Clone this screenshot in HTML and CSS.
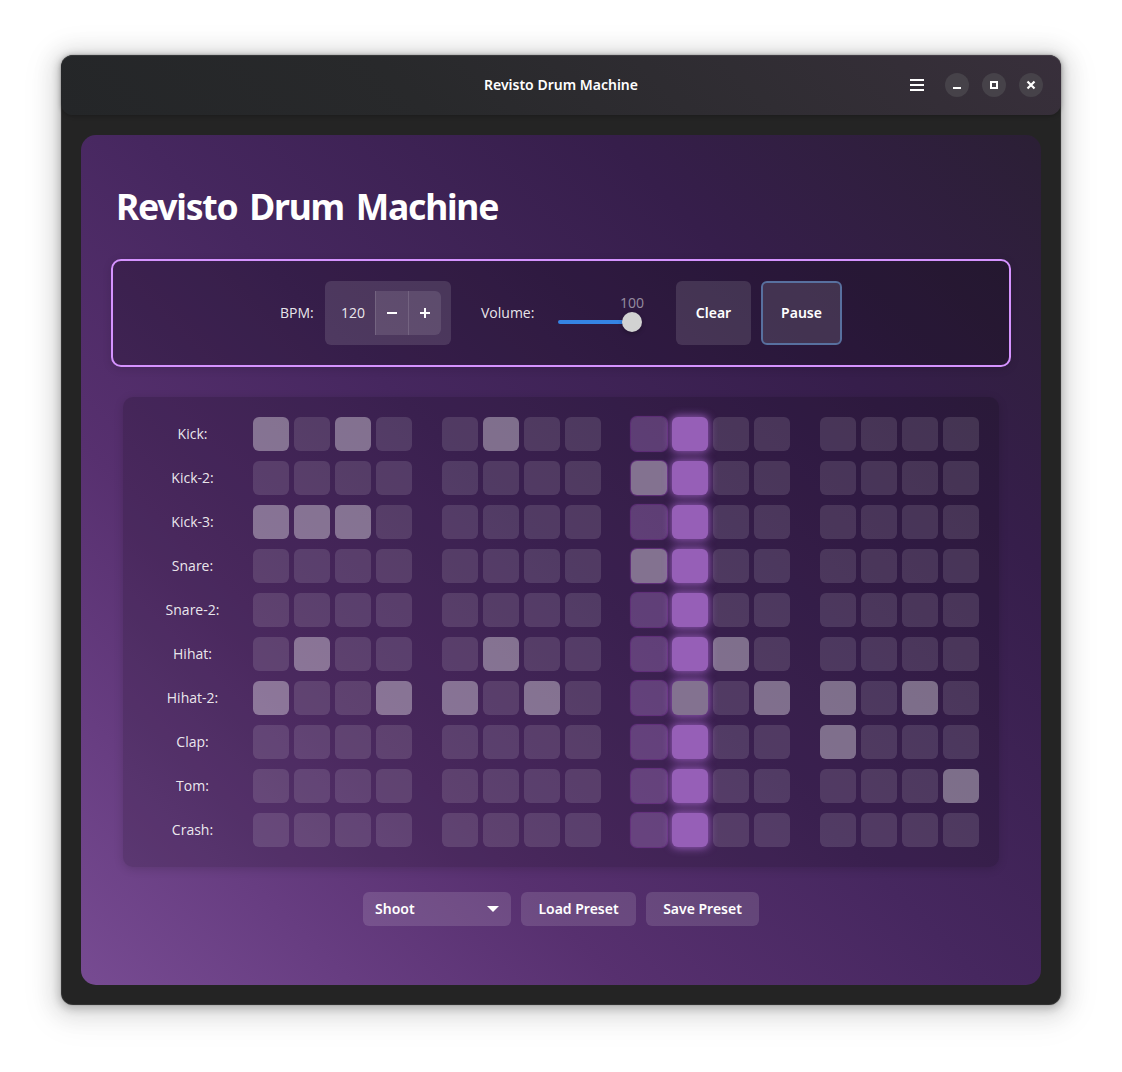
FILE: index.html
```html
<!DOCTYPE html>
<html lang="en">
<head>
<meta charset="utf-8">
<title>Revisto Drum Machine</title>
<link rel="stylesheet" href="styles.css">
</head>
<body>
<div class="window">
  <header class="headerbar">
    <div class="headerbar-title">Revisto Drum Machine</div>
    <div class="headerbar-end">
      <svg class="menu-icon" width="14" height="12" viewBox="0 0 14 12"><path d="M0 0h14v2H0zM0 5h14v2H0zM0 10h14v2H0z" fill="#fff"/></svg>
      <span class="window-button"><svg width="24" height="24" viewBox="0 0 24 24"><path d="M8 14h8v2H8z" fill="#fff"/></svg></span>
      <span class="window-button"><svg width="24" height="24" viewBox="0 0 24 24"><path d="M9 9h6v6H9z" fill="none" stroke="#fff" stroke-width="2"/></svg></span>
      <span class="window-button"><svg width="24" height="24" viewBox="0 0 24 24"><path d="M8.5 8.5l7 7M15.5 8.5l-7 7" stroke="#fff" stroke-width="2.2"/></svg></span>
    </div>
  </header>
  <main class="panel">
    <h1 class="title">Revisto Drum Machine</h1>
    <section class="controls">
      <span class="label bpm-label">BPM:</span>
      <div class="spin">
        <span class="spin-value">120</span>
        <span class="spin-button"><svg width="12" height="12" viewBox="0 0 12 12"><path d="M1 5h10v2H1z" fill="#fff"/></svg></span>
        <span class="spin-button spin-last"><svg width="12" height="12" viewBox="0 0 12 12"><path d="M1 5h4V1h2v4h4v2H7v4H5V7H1z" fill="#fff"/></svg></span>
      </div>
      <span class="label volume-label">Volume:</span>
      <div class="scale">
        <span class="scale-value">100</span>
        <div class="scale-row"><span class="scale-fill"></span><span class="scale-knob"></span></div>
      </div>
      <button class="control-button clear">Clear</button>
      <button class="control-button pause">Pause</button>
    </section>
    <section class="sequencer" id="sequencer"></section>
    <footer class="presets">
      <button class="preset dropdown"><span>Shoot</span><svg width="12" height="6" viewBox="0 0 12 6"><path d="M0 0h12L6 6z" fill="#fff"/></svg></button>
      <button class="preset load">Load Preset</button>
      <button class="preset save">Save Preset</button>
    </footer>
  </main>
</div>
<script src="script.js"></script>
</body>
</html>
```
FILE: script.js
```js
// Steps per track: "x" is on, "." is off
const tracks = [
  ["Kick:",    "x.x. .x.. .... ...."],
  ["Kick-2:",  ".... .... x... ...."],
  ["Kick-3:",  "xxx. .... .... ...."],
  ["Snare:",   ".... .... x... ...."],
  ["Snare-2:", ".... .... .... ...."],
  ["Hihat:",   ".x.. .x.. ..x. ...."],
  ["Hihat-2:", "x..x x.x. .x.x x.x."],
  ["Clap:",    ".... .... .... x..."],
  ["Tom:",     ".... .... .... ...x"],
  ["Crash:",   ".... .... .... ...."]
];
const playing = 9;
const root = document.getElementById("sequencer");
for (const [name, steps] of tracks) {
  const row = document.createElement("div");
  row.className = "track";
  const label = document.createElement("span");
  label.className = "label track-name";
  label.textContent = name;
  row.append(label);
  let index = 0;
  for (const beat of steps.split(" ")) {
    const group = document.createElement("div");
    group.className = "beat";
    for (const step of beat) {
      const cell = document.createElement("span");
      cell.className = "step";
      if (index === playing) cell.classList.add("playing");
      if (index === playing - 1) cell.classList.add("fading");
      if (step === "x") cell.classList.add("on");
      group.append(cell);
      index++;
    }
    row.append(group);
  }
  root.append(row);
}
```
FILE: styles.css
```css
* { box-sizing: border-box; }
body {
  margin: 0;
  padding: 55px 61px;
  height: 1072px;
  overflow: hidden;
  background: #fff;
  color: #fff;
  font-family: "Noto Sans", "Open Sans", sans-serif;
  font-size: 14px;
}
.window {
  width: 1000px;
  height: 950px;
  border-radius: 12px;
  background: #242424;
  box-shadow: inset 0 0 0 1px rgba(255,255,255,.07), 0 0 0 1px rgba(0,0,0,.05), 0 2px 8px 2px rgba(0,0,0,.2), 0 3px 20px 10px rgba(0,0,0,.09), 0 6px 32px 16px rgba(0,0,0,.04);
}
.headerbar {
  height: 60px;
  display: grid;
  grid-template-columns: 1fr auto 1fr;
  align-items: center;
  padding-right: 18px;
  border-radius: 12px;
  background: linear-gradient(45deg, #242628 0%, #28292b 35%, #302d33 68%, #382f3b 100%);
  box-shadow: inset 0 1px 0 rgba(255,255,255,.07), 0 1px 4px rgba(0,0,0,.25);
}
.headerbar-title {
  grid-column: 2;
  width: 156px;
  margin-left: 18px;
  padding-bottom: 2px;
  text-align: center;
  white-space: nowrap;
  font-weight: 600;
  font-size: 14px;
}
.headerbar-end {
  display: flex;
  justify-content: flex-end;
  align-items: center;
  gap: 13px;
}
.menu-icon { margin-right: 8px; }
.window-button {
  width: 24px;
  height: 24px;
  border-radius: 50%;
  background: #464249;
}
.window-button svg { display: block; }
.panel {
  width: 960px;
  height: 850px;
  margin: 20px;
  padding: 44px 30px 0;
  border-radius: 15px;
  background: linear-gradient(45deg, #774b92 0%, #673d81 15%, #57306f 30%, #46275f 50%, #361e4b 76%, #2b1f35 100%);
}
.title {
  margin: 0 0 26px 5px;
  height: 54px;
  line-height: 54px;
  font-size: 35.5px;
  font-weight: 700;
  letter-spacing: -1.25px;
  word-spacing: 4px;
  white-space: nowrap;
}
.controls {
  height: 108px;
  display: flex;
  align-items: center;
  padding-left: 167px;
  border: 2px solid #d593ff;
  border-radius: 10px;
  background: rgba(0,0,0,.22);
  box-shadow: 0 2px 10px rgba(0,0,0,.12);
}
.label {
  font-family: "Open Sans", "Noto Sans", sans-serif;
  font-weight: 400;
  font-size: 14px;
  color: rgba(255,255,255,.9);
  white-space: nowrap;
}
.bpm-label { width: 45px; padding-bottom: 2px; }
.spin {
  width: 126px;
  height: 64px;
  display: flex;
  padding: 10px;
  border-radius: 6px;
  background: rgba(255,255,255,.12);
}
.spin-value {
  width: 40px;
  padding-left: 6px;
  line-height: 44px;
  font-family: "Open Sans", sans-serif;
  color: rgba(255,255,255,.9);
}
.spin-button {
  width: 33px;
  display: flex;
  align-items: center;
  justify-content: center;
  border-left: 1px solid rgba(255,255,255,.13);
  background: rgba(255,255,255,.11);
}
.spin-last { border-radius: 0 6px 6px 0; }
.volume-label { width: 77px; margin-left: 30px; padding-bottom: 2px; }
.scale { width: 86px; margin-right: 32px; }
.scale-value {
  display: block;
  height: 20px;
  margin: -1px 0 -1px;
  padding-left: 62px;
  line-height: 20px;
  font-family: "Open Sans", sans-serif;
  color: rgba(255,255,255,.5);
}
.scale-row { display: flex; align-items: center; }
.scale-fill {
  width: 66px;
  height: 4px;
  border-radius: 2px;
  background: #3584e4;
}
.scale-knob {
  width: 20px;
  height: 20px;
  margin-left: -2px;
  border-radius: 50%;
  background: #d2d2d2;
  box-shadow: 0 2px 4px rgba(0,0,0,.25);
}
button {
  padding: 0 0 2px;
  border: 0;
  color: #fff;
  font: 600 14px "Noto Sans", "Open Sans", sans-serif;
  white-space: nowrap;
}
.control-button {
  height: 64px;
  border-radius: 6px;
  background: rgba(255,255,255,.12);
}
.clear { width: 75px; margin-right: 10px; }
.pause { width: 81px; border: 2px solid #58709f; }
.sequencer {
  width: 876px;
  height: 470px;
  margin: 30px 12px 25px;
  padding: 20px;
  display: grid;
  gap: 10px;
  border-radius: 10px;
  background: rgba(0,0,0,.16);
  box-shadow: 0 2px 10px rgba(0,0,0,.15);
}
.track { display: flex; gap: 30px; height: 34px; }
.track-name {
  width: 99px;
  margin-right: -19px;
  line-height: 34px;
  text-align: center;
}
.beat { display: flex; gap: 5px; }
.step {
  width: 36px;
  height: 34px;
  border-radius: 6px;
  background: rgba(255,255,255,.12);
}
.fading {
  background: rgba(190,140,220,.3);
  box-shadow: 0 0 1px 1px rgba(142,68,173,.5);
}
.playing {
  background: #965fb7;
  box-shadow: 0 0 8px 1px rgba(180,110,220,.75);
}
.step.on { background: rgba(255,255,255,.36); }
.step.on.playing, .step.on.fading { background: #837290; }
.presets { display: flex; justify-content: center; gap: 10px; }
.preset {
  height: 34px;
  border-radius: 6px;
  background: rgba(255,255,255,.13);
}
.dropdown {
  width: 148px;
  padding: 0 12px;
  display: flex;
  align-items: center;
  justify-content: space-between;
}
.dropdown span { padding-bottom: 2px; }
.load { width: 115px; }
.save { width: 113px; }
```
